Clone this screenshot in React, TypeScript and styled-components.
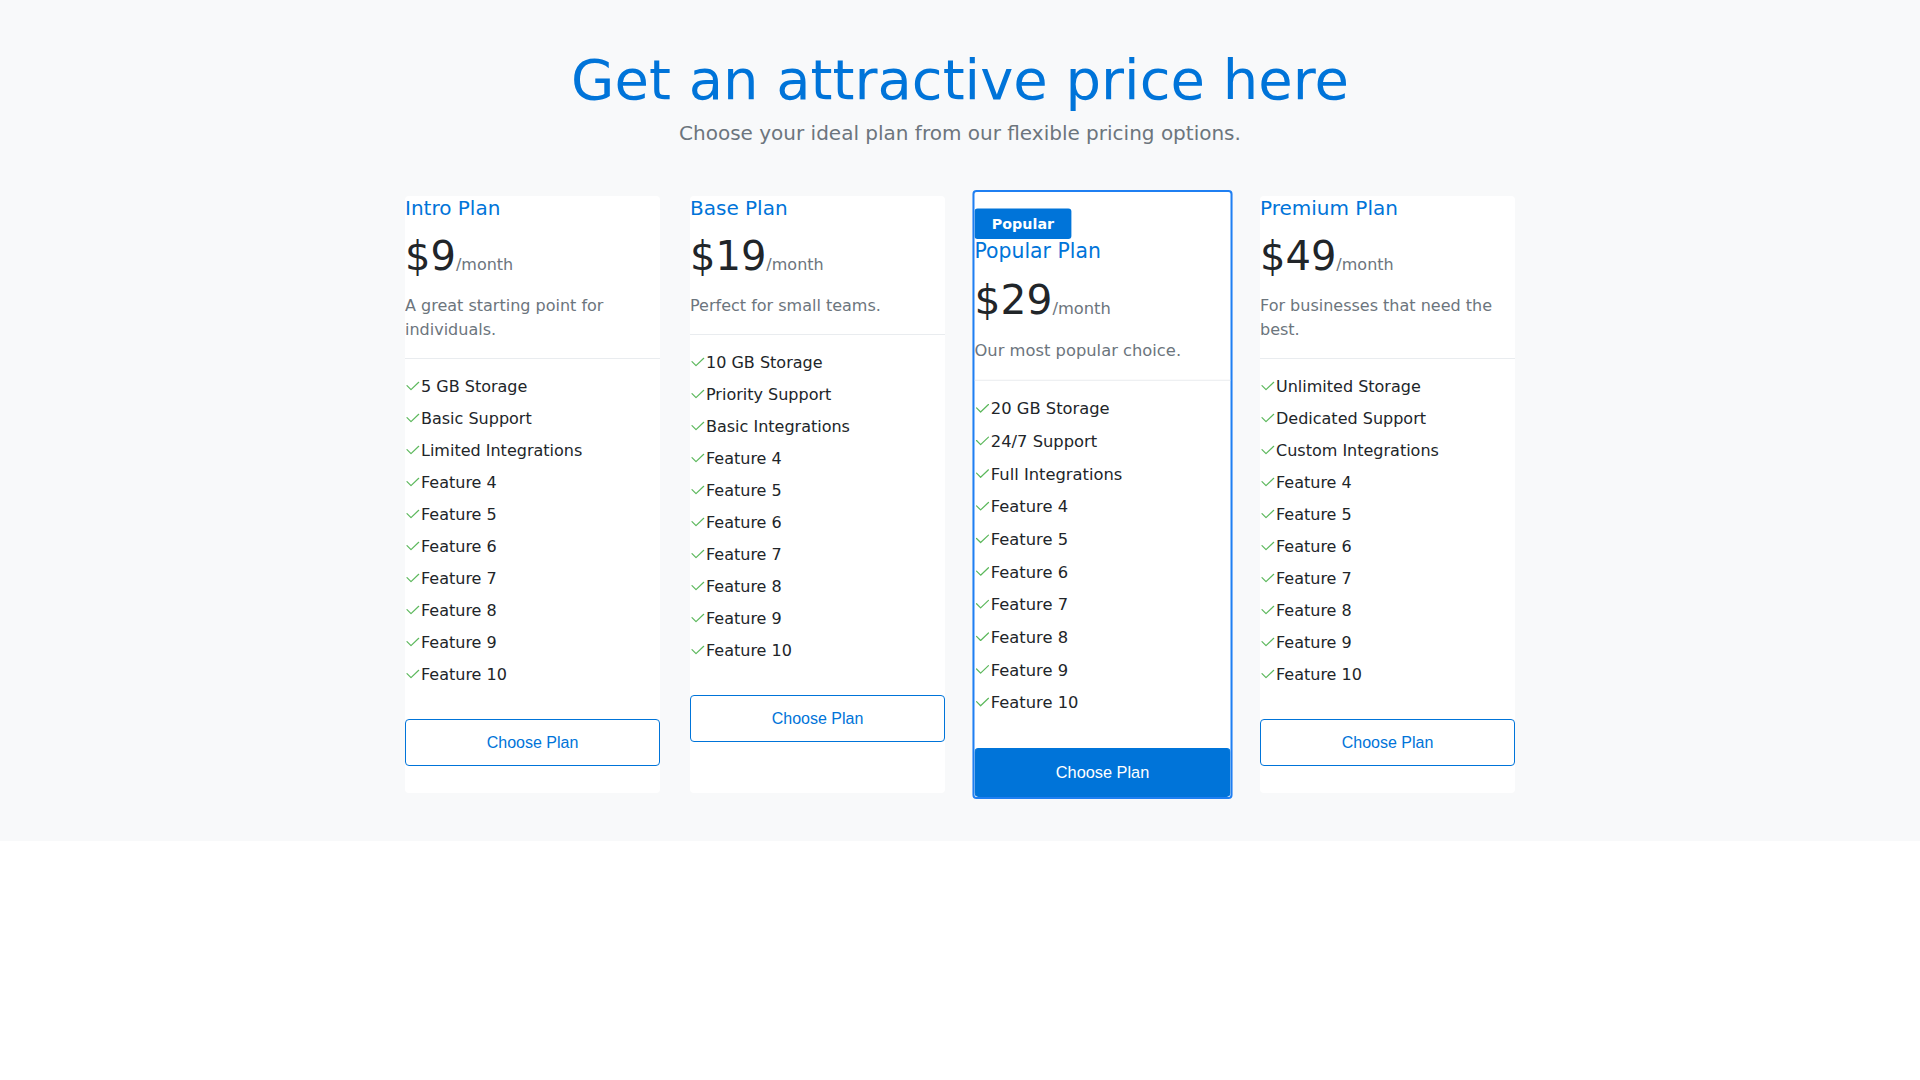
import React from "react";
import styled, { createGlobalStyle } from "styled-components";

const GlobalStyle = createGlobalStyle`
  *, *::before, *::after { box-sizing: border-box; }
  html, body { margin: 0; padding: 0; background: #ffffff; }
  body {
    font-family: "DejaVu Sans", "Noto Sans", sans-serif;
    color: #212529;
    font-size: 16px;
    line-height: 24px;
  }
`;

const Section = styled.section`
  background: #f8f9fa;
  padding: 46px 0 48px;
`;

const Header = styled.header`
  text-align: center;
  margin-bottom: 48px;
`;

const Heading = styled.h1`
  margin: 0 0 5px;
  font-size: 56px;
  line-height: 67px;
  font-weight: 400;
  color: #0074d9;
`;

const Lead = styled.p`
  margin: 0;
  font-size: 20px;
  line-height: 30px;
  color: #6c757d;
`;

const Grid = styled.div`
  width: 1110px;
  margin: 0 auto;
  display: grid;
  grid-template-columns: repeat(4, 255px);
  column-gap: 30px;
  align-items: stretch;
`;

const Card = styled.div<{ $featured?: boolean }>`
  display: flex;
  flex-direction: column;
  background: #ffffff;
  border-radius: 4px;
  border: ${(p) => (p.$featured ? "2px solid #1f7ff2" : "none")};
  padding-bottom: ${(p) => (p.$featured ? "0" : "27px")};
  transform: ${(p) => (p.$featured ? "scale(1.02)" : "none")};
  overflow: hidden;
`;

const Badge = styled.span`
  align-self: flex-start;
  margin-top: 16px;
  padding: 4px 17px;
  background: #0074d9;
  color: #ffffff;
  font-size: 14px;
  line-height: 22px;
  font-weight: 700;
  border-radius: 3px;
`;

const PlanName = styled.h3`
  margin: 0 0 8px;
  font-size: 20px;
  line-height: 24px;
  font-weight: 400;
  color: #0074d9;
`;

const PriceRow = styled.div`
  display: flex;
  align-items: baseline;
  margin-bottom: 10px;
`;

const Amount = styled.span`
  font-size: 40px;
  line-height: 56px;
  color: #212529;
`;

const Period = styled.span`
  font-size: 16px;
  line-height: 24px;
  color: #6c757d;
`;

const Description = styled.p`
  margin: 0 0 16px;
  font-size: 16px;
  line-height: 24px;
  color: #6c757d;
`;

const Divider = styled.hr`
  margin: 0;
  border: 0;
  border-top: 1px solid #e9ecef;
  height: 0;
`;

const FeatureList = styled.ul`
  list-style: none;
  margin: 16px 0 0;
  padding: 0;
`;

const Feature = styled.li`
  display: flex;
  align-items: flex-start;
  margin-bottom: 8px;
  font-size: 16px;
  line-height: 24px;
  color: #212529;
`;

const CheckIcon = styled.svg`
  flex: 0 0 16px;
  width: 16px;
  height: 24px;
`;

const ChooseButton = styled.button<{ $featured?: boolean }>`
  margin-top: 24px;
  width: 100%;
  flex: ${(p) => (p.$featured ? "1 0 auto" : "0 0 auto")};
  min-height: 47px;
  padding: 10px 16px;
  font-family: "Liberation Sans", Arial, sans-serif;
  font-size: 16px;
  line-height: 24px;
  border-radius: 4px;
  border: 1px solid #0074d9;
  background: ${(p) => (p.$featured ? "#0074d9" : "#ffffff")};
  color: ${(p) => (p.$featured ? "#ffffff" : "#0074d9")};
  cursor: pointer;
`;

type Plan = {
  name: string;
  price: string;
  description: string;
  features: string[];
  featured?: boolean;
};

const rest = ["Feature 4", "Feature 5", "Feature 6", "Feature 7", "Feature 8", "Feature 9", "Feature 10"];

const plans: Plan[] = [
  {
    name: "Intro Plan",
    price: "$9",
    description: "A great starting point for individuals.",
    features: ["5 GB Storage", "Basic Support", "Limited Integrations", ...rest],
  },
  {
    name: "Base Plan",
    price: "$19",
    description: "Perfect for small teams.",
    features: ["10 GB Storage", "Priority Support", "Basic Integrations", ...rest],
  },
  {
    name: "Popular Plan",
    price: "$29",
    description: "Our most popular choice.",
    features: ["20 GB Storage", "24/7 Support", "Full Integrations", ...rest],
    featured: true,
  },
  {
    name: "Premium Plan",
    price: "$49",
    description: "For businesses that need the best.",
    features: ["Unlimited Storage", "Dedicated Support", "Custom Integrations", ...rest],
  },
];

const Check = () => (
  <CheckIcon viewBox="0 0 16 24" aria-hidden="true">
    <polyline
      points="2,10.6 6,14.6 13.7,7.3"
      fill="none"
      stroke="#5cb85c"
      strokeWidth="1.2"
      strokeLinecap="round"
      strokeLinejoin="round"
    />
  </CheckIcon>
);

export default function App() {
  return (
    <>
      <GlobalStyle />
      <Section>
        <Header>
          <Heading>Get an attractive price here</Heading>
          <Lead>Choose your ideal plan from our flexible pricing options.</Lead>
        </Header>
        <Grid>
          {plans.map((plan) => (
            <Card key={plan.name} $featured={plan.featured}>
              {plan.featured && <Badge>Popular</Badge>}
              <PlanName>{plan.name}</PlanName>
              <PriceRow>
                <Amount>{plan.price}</Amount>
                <Period>/month</Period>
              </PriceRow>
              <Description>{plan.description}</Description>
              <Divider />
              <FeatureList>
                {plan.features.map((f) => (
                  <Feature key={f}>
                    <Check />
                    {f}
                  </Feature>
                ))}
              </FeatureList>
              <ChooseButton $featured={plan.featured}>Choose Plan</ChooseButton>
            </Card>
          ))}
        </Grid>
      </Section>
    </>
  );
}
